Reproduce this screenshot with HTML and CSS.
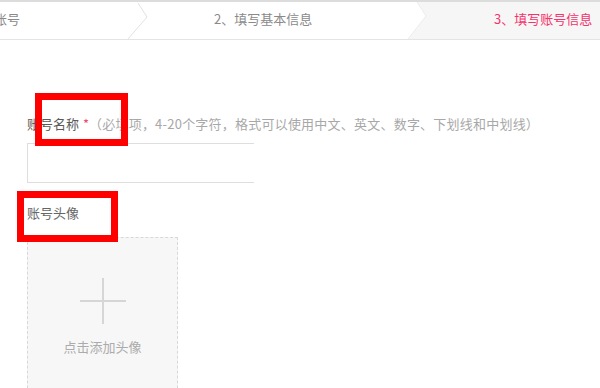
FILE: index.html
```html
<!DOCTYPE html>
<html lang="zh-CN">
<head>
<meta charset="utf-8">
<title>填写账号信息</title>
<link rel="stylesheet" href="styles.css">
</head>
<body>
<div class="page">
  <div class="steps">
    <div class="step step-one"><span>1、注册账号</span></div>
    <svg class="chev" width="20" height="37" viewBox="0 0 20 37"><polyline points="10,1 19,15 0,37" fill="none" stroke="#e2e2e2" stroke-width="1"/></svg>
    <div class="step step-two"><span>2、填写基本信息</span></div>
    <svg class="chev" width="20" height="37" viewBox="0 0 20 37"><polygon points="10,0 19,14 1,37 20,37 20,0" fill="#f6f6f6"/><polyline points="10,0 19,14 1,37" fill="none" stroke="#ececec" stroke-width="1"/></svg>
    <div class="step step-three"><span>3、填写账号信息</span></div>
  </div>

  <div class="form">
    <div class="label label-name">账号名称 <span class="req">*</span><span class="hint">（必填项，4-20个字符，格式可以使用中文、英文、数字、下划线和中划线）</span></div>
    <div class="input"></div>
    <div class="label label-avatar">账号头像</div>
    <div class="upload">
      <svg class="plus" width="46" height="46" viewBox="0 0 46 46"><path d="M0 23H46M23 0V46" stroke="#d6d6d6" stroke-width="2" fill="none"/></svg>
      <div class="upload-text">点击添加头像</div>
    </div>
  </div>
  <div class="footer"></div>

  <div class="mark mark-one"></div>
  <div class="mark mark-two"></div>
</div>
</body>
</html>
```
FILE: styles.css
```css
html, body {
  margin: 0;
  padding: 0;
  background: #fff;
  overflow: hidden;
}
.page {
  position: relative;
  width: 600px;
  height: 388px;
  overflow: hidden;
  font-family: "Noto Sans CJK SC", "Noto Sans", sans-serif;
  font-size: 13px;
}
.steps {
  display: flex;
  height: 37px;
  border-top: 2px solid #dcdcdc;
  border-bottom: 1px solid #e4e4e4;
  color: #8a8a8a;
  line-height: 33px;
}
.step {
  display: flex;
  white-space: nowrap;
  overflow: hidden;
  box-sizing: border-box;
}
.step-one {
  width: 128px;
  justify-content: flex-end;
  padding-right: 108px;
}
.step-one span {
  margin-left: -6px;
}
.step-two {
  width: 259px;
  padding-left: 66px;
}
.step-three {
  flex: 1;
  background: #f6f6f6;
  padding-left: 67px;
  color: #f4336b;
}
.chev {
  display: block;
  flex: none;
}
.form {
  padding-left: 27px;
}
.label {
  line-height: 20px;
  white-space: nowrap;
}
.label-name {
  margin-top: 74px;
  color: #5a5a5a;
}
.req {
  color: #f04a6a;
  margin-left: 1px;
}
.hint {
  color: #a8a8a8;
  letter-spacing: 0.22px;
}
.input {
  margin-top: 9px;
  width: 226px;
  height: 38px;
  border: 1px solid #dedede;
  border-right: none;
}
.label-avatar {
  margin-top: 20px;
  color: #666;
}
.upload {
  margin-top: 14px;
  width: 149px;
  height: 145px;
  border: 1px dashed #d8d8d8;
  border-bottom: none;
  background: #f7f7f7;
  display: flex;
  flex-direction: column;
  align-items: center;
  padding-top: 40px;
  box-sizing: content-box;
}
.upload .plus {
  display: block;
}
.upload-text {
  margin-top: 13px;
  line-height: 20px;
  color: #ababab;
}
.footer {
  height: 5px;
  background: #f4f4f4;
}
.mark {
  position: absolute;
  border: 7px solid #ff0000;
  box-sizing: border-box;
}
.mark-one {
  left: 35px;
  top: 93px;
  width: 93px;
  height: 53px;
}
.mark-two {
  left: 17px;
  top: 191px;
  width: 101px;
  height: 51px;
}
```
